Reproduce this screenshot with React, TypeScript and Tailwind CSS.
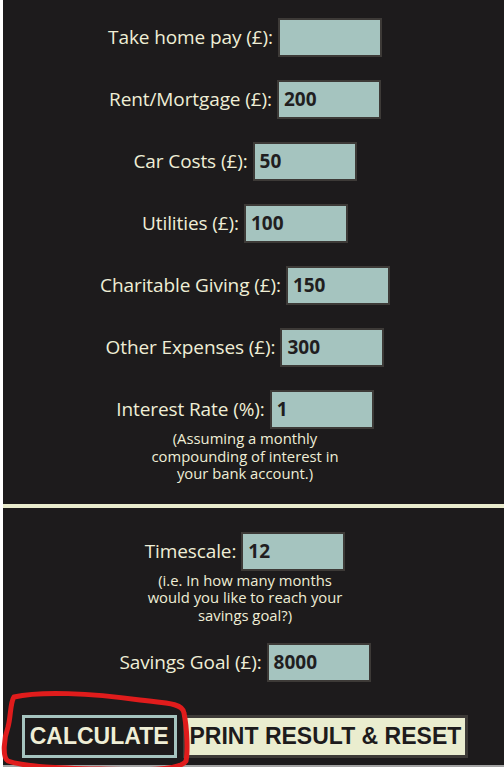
import React from "react";

const font = { fontFamily: "'Open Sans', 'Noto Sans', sans-serif" };

interface FieldProps {
  label: string;
  value?: string;
}

const Field: React.FC<FieldProps> = ({ label, value }) => {
  return (
    <div className="flex items-center justify-center gap-[5px]">
      <label className="text-[19px] tracking-[-0.1px] text-[#efeed6]">{label}</label>
      <div className="h-[39px] w-[104px] border-2 border-[#3d3a37] bg-[#a5c4bf] px-[5px] flex items-center text-[19px] font-bold text-[#211e1f]">
        {value}
      </div>
    </div>
  );
};

const Note: React.FC<{ children: React.ReactNode }> = ({ children }) => (
  <p className="w-[200px] text-center text-[14.8px] leading-[17.5px] text-[#efeed6]">
    {children}
  </p>
);

export default function App() {
  return (
    <div className="min-h-screen bg-white pl-[3px]" style={font}>
      <div className="bg-[#1d1b1c] border-b-2 border-[#a3a3a3]">
        <section className="w-[484px] flex flex-col items-center pt-[18px] pb-[21px]">
          <div className="flex flex-col items-center gap-[23px]">
            <Field label="Take home pay (£):" />
            <Field label="Rent/Mortgage (£):" value="200" />
            <Field label="Car Costs (£):" value="50" />
            <Field label="Utilities (£):" value="100" />
            <Field label="Charitable Giving (£):" value="150" />
            <Field label="Other Expenses (£):" value="300" />
            <Field label="Interest Rate (%):" value="1" />
          </div>
          <div className="mt-[1px]">
            <Note>(Assuming a monthly compounding of interest in your bank account.)</Note>
          </div>
        </section>

        <div className="h-[4px] bg-[#e9ebcd]" />

        <section className="relative w-[484px] flex flex-col items-center pt-[24px] pb-[7px]">
          <Field label="Timescale:" value="12" />
          <div className="mt-[1px]">
            <Note>(i.e. In how many months would you like to reach your savings goal?)</Note>
          </div>
          <div className="mt-[19px]">
            <Field label="Savings Goal (£):" value="8000" />
          </div>
          <div
            className="mt-[33px] flex items-center gap-[6px]"
            style={{ fontFamily: "'Liberation Sans', Arial, sans-serif" }}
          >
            <button className="border-[3px] border-[#a5c4bf] bg-[#1d1b1c] px-[5px] py-[6px] text-[23px] leading-[25px] font-bold text-[#efeed6]">
              CALCULATE
            </button>
            <button className="border-[3px] border-[#3d3a37] bg-[#eaedcf] px-[4px] py-[6px] text-[23px] leading-[25px] font-bold text-[#1d1b1c]">
              PRINT RESULT &amp; RESET
            </button>
          </div>

          {/* red hand-drawn circle round the calculate button */}
          <svg
            className="absolute left-[-3px] top-[175px] pointer-events-none"
            width="200"
            height="92"
            viewBox="0 0 200 92"
          >
            <path
              d="M14 14 C 40 8, 90 10, 140 17 C 165 20, 183 20, 184 30 C 187 45, 188 68, 186 78 C 180 88, 140 87, 100 86 C 60 85, 25 84, 8 78 C 2 74, 4 55, 8 44 C 11 33, 10 20, 14 14 Z"
              fill="none"
              stroke="#e01c1c"
              strokeWidth="5"
              strokeLinejoin="round"
            />
          </svg>
        </section>
      </div>
    </div>
  );
}
